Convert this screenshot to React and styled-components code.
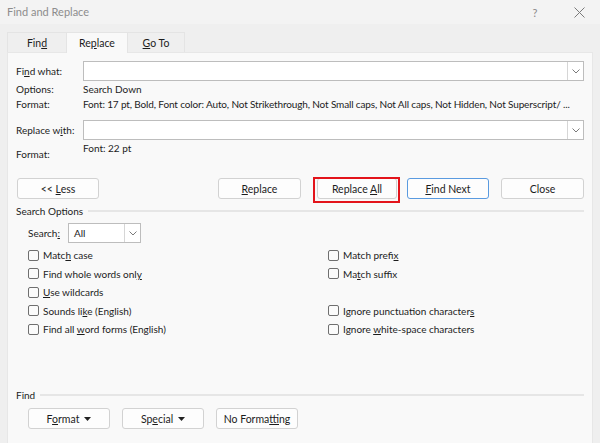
import React from "react";
import styled, { createGlobalStyle } from "styled-components";

const Global = createGlobalStyle`
  html, body { margin: 0; padding: 0; }
  body { background: #efefef; }
  * { box-sizing: border-box; }
`;

const Window = styled.div`
  width: 600px;
  height: 443px;
  background: #efefef;
  font-family: Lato, "Noto Sans", sans-serif;
  font-size: 10px;
  color: #1c1c1c;
  display: flex;
  flex-direction: column;
  overflow: hidden;
`;

const TitleBar = styled.div`
  height: 24px;
  background: #f3f3f3;
  display: flex;
  align-items: center;
  padding: 0 14px 0 7px;
  color: #8d8d8d;
  font-size: 11px;
`;

const Title = styled.div`
  flex: 1;
  margin-top: -2px;
`;

const TitleButton = styled.div`
  width: 14px;
  display: flex;
  justify-content: center;
  align-items: center;
  margin-left: ${(p) => p.$gap || 0}px;
  color: #8a8a8a;
  font-size: 11px;
`;

const TabStrip = styled.div`
  display: flex;
  align-items: flex-end;
  padding: 0 0 0 7px;
  height: 28px;
`;

const Tab = styled.div`
  width: ${(p) => p.$w}px;
  height: ${(p) => (p.$active ? 21 : 20)}px;
  display: flex;
  align-items: center;
  justify-content: center;
  background: ${(p) => (p.$active ? "#f9f9f9" : "#efefef")};
  border: 1px solid #e4e4e4;
  border-bottom: none;
  margin-left: ${(p) => (p.$first ? 0 : -1)}px;
  position: relative;
  z-index: ${(p) => (p.$active ? 2 : 1)};
  margin-bottom: ${(p) => (p.$active ? -1 : 0)}px;
  font-size: 10.5px;
  color: #1c1c1c;
`;

const U = styled.span`
  text-decoration: underline;
  text-underline-offset: 1px;
`;

const Panel = styled.div`
  margin: 0 7px;
  flex: 1;
  background: #f9f9f9;
  border: 1px solid #e7e7e7;
  border-bottom: none;
  padding: 8px 8px 14px 8px;
  display: flex;
  flex-direction: column;
`;

const FieldRow = styled.div`
  display: flex;
  align-items: ${(p) => (p.$top ? "flex-start" : "center")};
  margin-top: ${(p) => p.$mt || 0}px;
`;

const Label = styled.div`
  width: 67px;
  flex: none;
  margin-top: ${(p) => p.$mt || 0}px;
  line-height: 15px;
  white-space: nowrap;
`;

const Value = styled.div`
  flex: 1;
  min-width: 0;
  line-height: 15px;
  white-space: nowrap;
  overflow: hidden;
  letter-spacing: ${(p) => (p.$tight ? "-0.14px" : "normal")};
`;

const Combo = styled.div`
  flex: ${(p) => (p.$w ? "none" : "1")};
  width: ${(p) => (p.$w ? p.$w + "px" : "auto")};
  height: 20px;
  background: #fff;
  border: 1px solid #bdbdbd;
  display: flex;
`;

const ComboText = styled.div`
  flex: 1;
  padding-left: 5px;
  line-height: 18px;
`;

const DropBtn = styled.div`
  width: 16px;
  height: 18px;
  border-left: 1px solid #d6d6d6;
  display: flex;
  align-items: center;
  justify-content: center;
`;

const Chevron = () => (
  <svg width="8" height="5" viewBox="0 0 8 5">
    <polyline points="0.5,0.5 4,4 7.5,0.5" fill="none" stroke="#7a7a7a" strokeWidth="1" />
  </svg>
);

const ButtonRow = styled.div`
  display: flex;
  align-items: flex-start;
  margin-top: ${(p) => p.$mt || 0}px;
  padding-left: ${(p) => p.$pl || 0}px;
  height: 21px;
`;

const Button = styled.div`
  width: ${(p) => p.$w || 82}px;
  height: 21px;
  margin-left: ${(p) => p.$ml || 0}px;
  background: #fdfdfd;
  border: 1px solid ${(p) => (p.$primary ? "#5a9be0" : "#d2d2d2")};
  border-radius: 3px;
  display: flex;
  align-items: center;
  justify-content: center;
  font-size: 10.5px;
  color: #1c1c1c;
  position: relative;
  flex: none;
  white-space: pre;
`;

const CaretWrap = styled.span`
  display: inline-flex;
  margin-left: 5px;
  margin-top: 1px;
`;

const Highlight = styled.div`
  position: absolute;
  left: -5px;
  top: -2px;
  right: -4px;
  bottom: -5px;
  border: 2px solid #e3141b;
`;

const Spacer = styled.div`
  flex: 1;
`;

const SectionRow = styled.div`
  display: flex;
  align-items: center;
  height: 14px;
  margin-top: ${(p) => p.$mt || 0}px;
  gap: 5px;
`;

const SectionLine = styled.div`
  flex: 1;
  height: 2px;
  background: #e6e6e6;
  margin-top: -1px;
`;

const SearchRow = styled.div`
  display: flex;
  align-items: center;
  padding-left: 12px;
  margin-top: ${(p) => p.$mt || 0}px;
`;

const SearchLabel = styled.div`
  width: 40px;
`;

const OptionsGrid = styled.div`
  display: grid;
  grid-template-columns: 300px 1fr;
  grid-auto-rows: 18.5px;
  padding-left: 12px;
  margin-top: 3px;
`;

const Check = styled.label`
  display: flex;
  align-items: center;
  gap: 4px;
  white-space: nowrap;
  grid-column: ${(p) => p.$col};
  grid-row: ${(p) => p.$row};
`;

const Box = styled.span`
  width: 11px;
  height: 11px;
  border: 1px solid #6f6f6f;
  border-radius: 2px;
  background: #fbfbfb;
  flex: none;
`;

const Bottom = styled.div`
  margin-top: auto;
`;

const Caret = () => (
  <CaretWrap>
    <svg width="7" height="4" viewBox="0 0 7 4">
      <polygon points="0,0 7,0 3.5,4" fill="#222" />
    </svg>
  </CaretWrap>
);

const CloseIcon = () => (
  <svg width="11" height="11" viewBox="0 0 11 11">
    <path d="M0.5 0.5 L10.5 10.5 M10.5 0.5 L0.5 10.5" stroke="#7a7a7a" strokeWidth="1" />
  </svg>
);

const leftOpts = [
  [1, <>Matc<U>h</U> case</>],
  [2, <>Find whole words onl<U>y</U></>],
  [3, <><U>U</U>se wildcards</>],
  [4, <>Sounds li<U>k</U>e (English)</>],
  [5, <>Find all <U>w</U>ord forms (English)</>],
];
const rightOpts = [
  [1, <>Match prefi<U>x</U></>],
  [2, <>Ma<U>t</U>ch suffix</>],
  [4, <>Ignore punctuation character<U>s</U></>],
  [5, <>Ignore <U>w</U>hite-space characters</>],
];

export default function App() {
  return (
    <>
      <Global />
      <Window>
        <TitleBar>
          <Title>Find and Replace</Title>
          <TitleButton>?</TitleButton>
          <TitleButton $gap={30}><CloseIcon /></TitleButton>
        </TitleBar>
        <TabStrip>
          <Tab $w={60} $first><span>Fin<U>d</U></span></Tab>
          <Tab $w={62} $active><span>Re<U>p</U>lace</span></Tab>
          <Tab $w={58}><span><U>G</U>o To</span></Tab>
        </TabStrip>
        <Panel>
          <FieldRow>
            <Label>Fi<U>n</U>d what:</Label>
            <Combo>
              <ComboText />
              <DropBtn><Chevron /></DropBtn>
            </Combo>
          </FieldRow>
          <FieldRow $mt={1}>
            <Label>Options:</Label>
            <Value>Search Down</Value>
          </FieldRow>
          <FieldRow>
            <Label>Format:</Label>
            <Value $tight>
              Font: 17 pt, Bold, Font color: Auto, Not Strikethrough, Not Small caps, Not All caps, Not Hidden, Not Superscript/ ...
            </Value>
          </FieldRow>
          <FieldRow $mt={8}>
            <Label>Replace w<U>i</U>th:</Label>
            <Combo>
              <ComboText />
              <DropBtn><Chevron /></DropBtn>
            </Combo>
          </FieldRow>
          <FieldRow $top $mt={1}>
            <Label $mt={6}>Format:</Label>
            <Value>Font: 22 pt</Value>
          </FieldRow>
          <ButtonRow $mt={16} $pl={1}>
            <Button $w={82}><span>&lt;&lt; <U>L</U>ess</span></Button>
            <Spacer />
            <Button $w={83}><span><U>R</U>eplace</span></Button>
            <Button $w={80} $ml={16}>
              <span>Replace <U>A</U>ll</span>
              <Highlight />
            </Button>
            <Button $w={82} $ml={10} $primary><span><U>F</U>ind Next</span></Button>
            <Button $w={83} $ml={12}><span>Close</span></Button>
          </ButtonRow>
          <SectionRow $mt={5}>
            <span>Search Options</span>
            <SectionLine />
          </SectionRow>
          <SearchRow $mt={5}>
            <SearchLabel>Search<U>:</U></SearchLabel>
            <Combo $w={73}>
              <ComboText>All</ComboText>
              <DropBtn><Chevron /></DropBtn>
            </Combo>
          </SearchRow>
          <OptionsGrid>
            {leftOpts.map(([r, t]) => (
              <Check key={"l" + r} $col={1} $row={r}>
                <Box />
                <span>{t}</span>
              </Check>
            ))}
            {rightOpts.map(([r, t]) => (
              <Check key={"r" + r} $col={2} $row={r}>
                <Box />
                <span>{t}</span>
              </Check>
            ))}
          </OptionsGrid>
          <Bottom>
            <SectionRow>
              <span>Find</span>
              <SectionLine />
            </SectionRow>
            <ButtonRow $mt={6} $pl={12}>
              <Button $w={82}><span>F<U>o</U>rmat</span><Caret /></Button>
              <Button $w={82} $ml={12}><span>Sp<U>e</U>cial</span><Caret /></Button>
              <Button $w={82} $ml={12}><span>No Forma<U>t</U>ting</span></Button>
            </ButtonRow>
          </Bottom>
        </Panel>
      </Window>
    </>
  );
}
